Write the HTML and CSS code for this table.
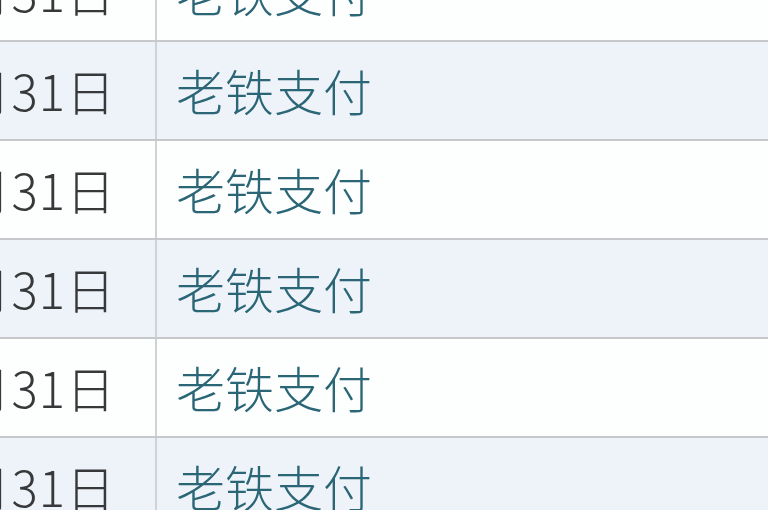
FILE: index.html
```html
<!DOCTYPE html>
<html lang="zh-CN">
<head>
<meta charset="utf-8">
<link rel="stylesheet" href="styles.css">
</head>
<body>
<div class="table">
  <div class="row row-white"><div class="cell-date"><span>1月31日</span></div><div class="cell-name">老铁支付</div></div>
  <div class="row row-blue"><div class="cell-date"><span>1月31日</span></div><div class="cell-name">老铁支付</div></div>
  <div class="row row-white"><div class="cell-date"><span>1月31日</span></div><div class="cell-name">老铁支付</div></div>
  <div class="row row-blue"><div class="cell-date"><span>1月31日</span></div><div class="cell-name">老铁支付</div></div>
  <div class="row row-white"><div class="cell-date"><span>1月31日</span></div><div class="cell-name">老铁支付</div></div>
  <div class="row row-blue"><div class="cell-date"><span>1月31日</span></div><div class="cell-name">老铁支付</div></div>
</div>
</body>
</html>
```
FILE: styles.css
```css
html, body {
  margin: 0;
  padding: 0;
  width: 768px;
  height: 510px;
  overflow: hidden;
  background: #ffffff;
}
.table {
  display: flex;
  flex-direction: column;
  margin-top: -57px;
  font-family: "Noto Sans CJK SC", "Noto Sans", sans-serif;
  font-size: 49px;
  font-weight: 300;
}
.row {
  display: flex;
  height: 97px;
  border-bottom: 2px solid #c6c8cb;
  flex-shrink: 0;
}
.row-white { background: #fdfefe; }
.row-blue { background: #eef2f9; }
.cell-date {
  width: 116px;
  padding-right: 39px;
  padding-bottom: 3px;
  border-right: 2px solid #cfd2d6;
  display: flex;
  justify-content: flex-end;
  align-items: center;
  color: #36383a;
  flex-shrink: 0;
}
.cell-date span {
  white-space: nowrap;
  flex-shrink: 0;
  letter-spacing: 1px;
}
.cell-name {
  display: flex;
  align-items: center;
  padding-left: 19px;
  padding-bottom: 3px;
  color: #2b6677;
  white-space: nowrap;
}
```
